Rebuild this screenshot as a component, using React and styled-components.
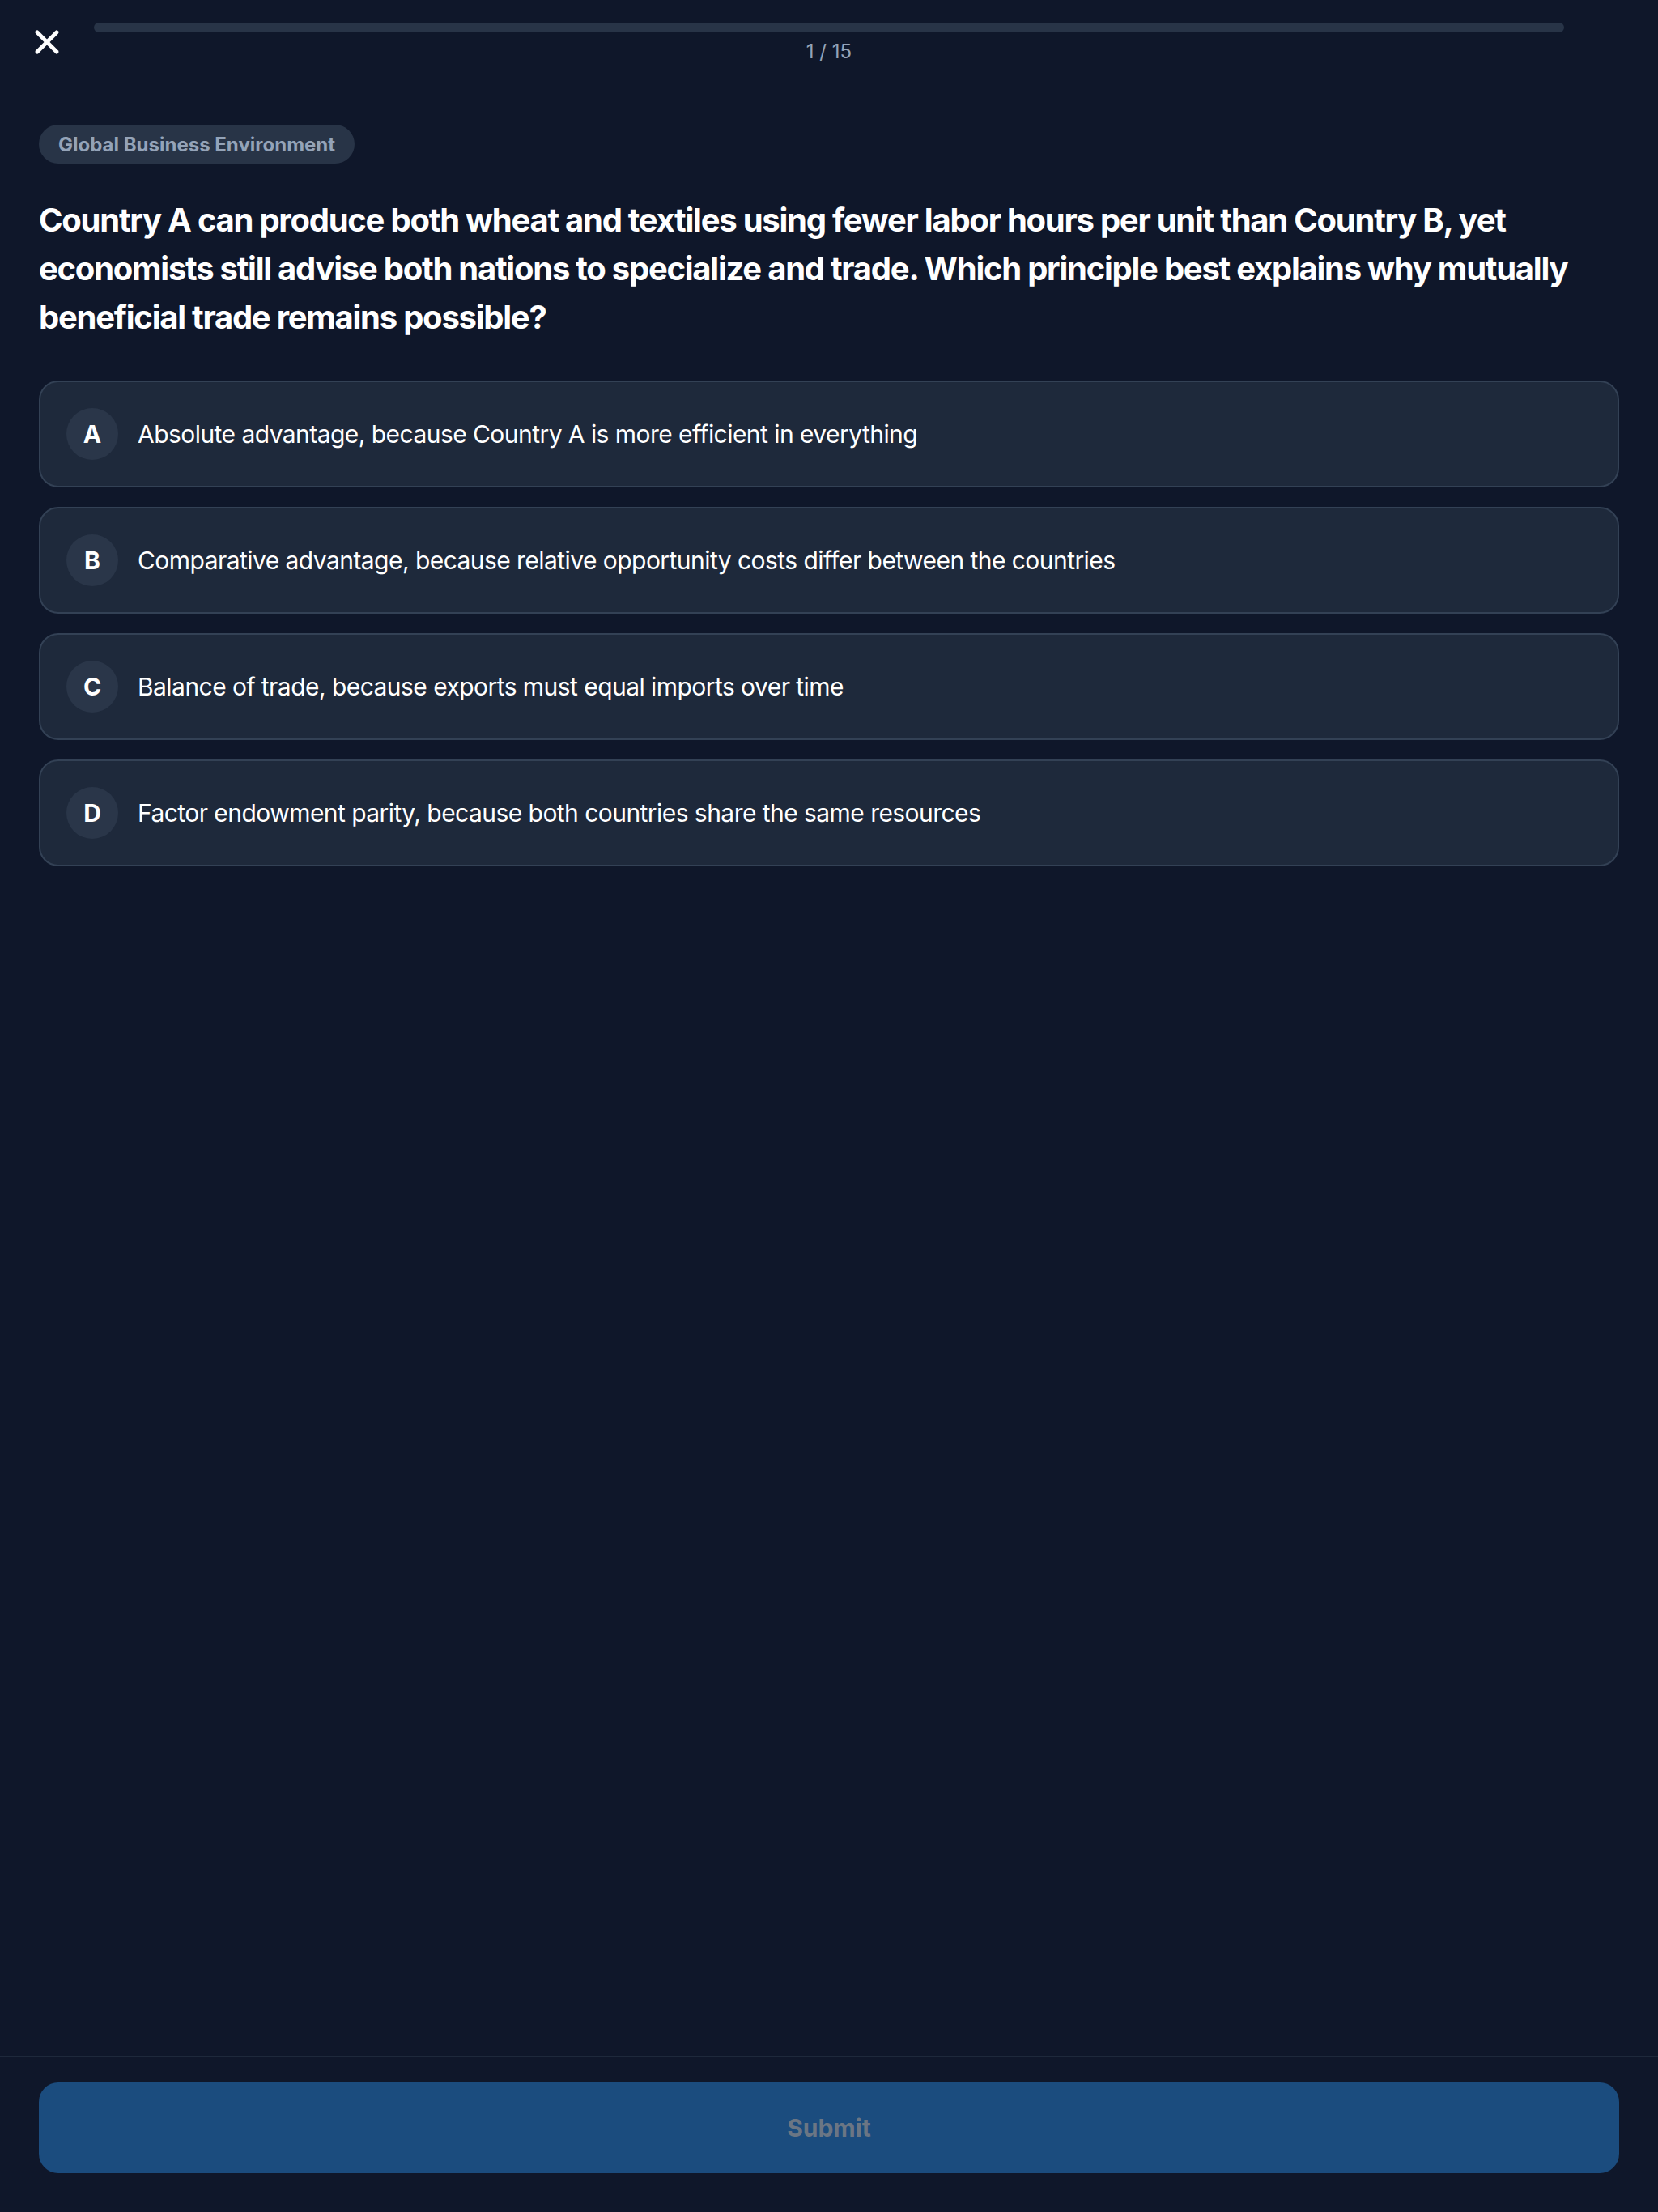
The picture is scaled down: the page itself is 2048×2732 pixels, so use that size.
import React from "react";
import styled, { createGlobalStyle } from "styled-components";

const Global = createGlobalStyle`
  html, body { margin: 0; padding: 0; background: #0f172a; }
  body { font-family: Inter, "Noto Sans", "Liberation Sans", sans-serif; color: #f8fafc; }
  * { box-sizing: border-box; }
`;

const Page = styled.div`
  min-height: 100vh;
  display: flex;
  flex-direction: column;
  background: #0f172a;
`;

const Header = styled.header`
  display: flex;
  align-items: flex-start;
  gap: 34px;
  padding: 28px 34px 0;
`;

const CloseButton = styled.button`
  width: 48px;
  height: 48px;
  padding: 0;
  border: 0;
  background: transparent;
  color: #ffffff;
  display: flex;
  align-items: center;
  justify-content: center;
  cursor: pointer;
  flex: none;
`;

const Spacer = styled.div`
  width: 48px;
  flex: none;
`;

const ProgressColumn = styled.div`
  flex: 1;
  display: flex;
  flex-direction: column;
  align-items: center;
  gap: 8px;
`;

const Track = styled.div`
  width: 100%;
  height: 12px;
  border-radius: 6px;
  background: #283447;
  overflow: hidden;
`;

const Fill = styled.div`
  height: 100%;
  background: #3b82f6;
  border-radius: 6px;
`;

const Counter = styled.div`
  font-size: 24px;
  line-height: 32px;
  color: #94a3b8;
`;

const Main = styled.main`
  flex: 1;
  display: flex;
  flex-direction: column;
  align-items: flex-start;
  padding: 74px 48px 0;
`;

const Tag = styled.span`
  display: inline-flex;
  align-items: center;
  height: 48px;
  padding: 0 24px;
  border-radius: 24px;
  background: #283447;
  color: #94a3b8;
  font-size: 24px;
  font-weight: 700;
`;

const Question = styled.h1`
  margin: 40px 0 48px;
  font-size: 40px;
  line-height: 60px;
  font-weight: 700;
  letter-spacing: -1.25px;
  color: #ffffff;
`;

const Options = styled.div`
  width: 100%;
  display: flex;
  flex-direction: column;
  gap: 24px;
`;

const Option = styled.button`
  width: 100%;
  display: flex;
  align-items: center;
  gap: 24px;
  padding: 32px;
  border: 2px solid #334155;
  border-radius: 24px;
  background: #1e293b;
  color: #ffffff;
  font-family: inherit;
  text-align: left;
  cursor: pointer;
`;

const Letter = styled.span`
  width: 64px;
  height: 64px;
  flex: none;
  border-radius: 50%;
  background: #2a3649;
  display: flex;
  align-items: center;
  justify-content: center;
  font-size: 30px;
  font-weight: 700;
  color: #ffffff;
`;

const OptionText = styled.span`
  font-size: 30px;
  line-height: 44px;
  letter-spacing: -0.55px;
  color: #ffffff;
`;

const Footer = styled.footer`
  border-top: 2px solid #1e293b;
  padding: 31px 48px 48px;
`;

const Submit = styled.button`
  width: 100%;
  height: 112px;
  border: 0;
  border-radius: 24px;
  background: #1b4c7e;
  color: #6b7684;
  font-family: inherit;
  font-size: 30px;
  font-weight: 700;
`;

const XIcon = () => (
  <svg width="48" height="48" viewBox="0 0 24 24" fill="none" stroke="currentColor" strokeWidth="2.5" strokeLinecap="round" strokeLinejoin="round">
    <path d="M18 6 6 18" />
    <path d="m6 6 12 12" />
  </svg>
);

const options = [
  ["A", "Absolute advantage, because Country A is more efficient in everything"],
  ["B", "Comparative advantage, because relative opportunity costs differ between the countries"],
  ["C", "Balance of trade, because exports must equal imports over time"],
  ["D", "Factor endowment parity, because both countries share the same resources"],
];

export default function App() {
  return (
    <Page>
      <Global />
      <Header>
        <CloseButton aria-label="Close">
          <XIcon />
        </CloseButton>
        <ProgressColumn>
          <Track>
            <Fill style={{ width: `${(0 / 15) * 100}%` }} />
          </Track>
          <Counter>1 / 15</Counter>
        </ProgressColumn>
        <Spacer />
      </Header>
      <Main>
        <Tag>Global Business Environment</Tag>
        <Question>
          Country A can produce both wheat and textiles using fewer labor hours per unit than Country B, yet economists still advise both nations to specialize and trade. Which principle best explains why mutually beneficial trade remains possible?
        </Question>
        <Options>
          {options.map(([l, t]) => (
            <Option key={l}>
              <Letter>{l}</Letter>
              <OptionText>{t}</OptionText>
            </Option>
          ))}
        </Options>
      </Main>
      <Footer>
        <Submit disabled>Submit</Submit>
      </Footer>
    </Page>
  );
}
